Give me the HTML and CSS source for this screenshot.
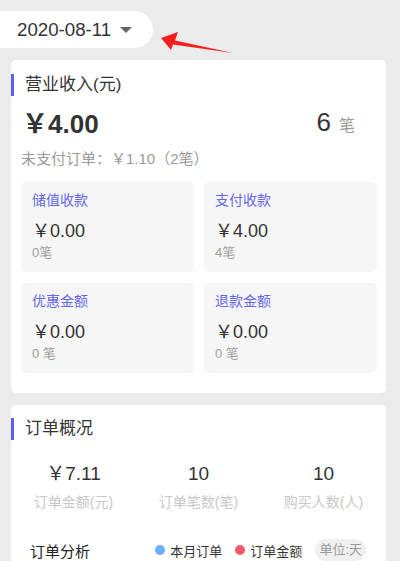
FILE: index.html
```html
<!DOCTYPE html>
<html lang="zh-CN">
<head>
<meta charset="utf-8">
<link rel="stylesheet" href="styles.css">
</head>
<body>
<div class="page">
  <div class="date-row">
    <div class="date-pill">
      <span class="date-text">2020-08-11</span>
      <span class="caret"></span>
    </div>
  </div>
  <svg class="arrow" width="80" height="30" viewBox="155 28 80 30">
    <polygon points="161,38 178,32 175,40.5 233,53 173,44.5 171,50" fill="#f61e1c"/>
  </svg>

  <section class="card card-income">
    <div class="card-head"><span class="bar"></span><span class="card-title">营业收入(元)</span></div>
    <div class="main-row">
      <span class="main-amount">￥4.00</span>
      <span class="main-count">6<span class="unit">笔</span></span>
    </div>
    <div class="unpaid">未支付订单：￥1.10（2笔）</div>
    <div class="tiles">
      <div class="tile">
        <div class="tile-label">储值收款</div>
        <div class="tile-amount">￥0.00</div>
        <div class="tile-count">0笔</div>
      </div>
      <div class="tile">
        <div class="tile-label">支付收款</div>
        <div class="tile-amount">￥4.00</div>
        <div class="tile-count">4笔</div>
      </div>
      <div class="tile">
        <div class="tile-label">优惠金额</div>
        <div class="tile-amount">￥0.00</div>
        <div class="tile-count">0 笔</div>
      </div>
      <div class="tile">
        <div class="tile-label">退款金额</div>
        <div class="tile-amount">￥0.00</div>
        <div class="tile-count">0 笔</div>
      </div>
    </div>
  </section>

  <section class="card card-orders">
    <div class="card-head"><span class="bar"></span><span class="card-title">订单概况</span></div>
    <div class="stats">
      <div class="stat"><div class="stat-value">￥7.11</div><div class="stat-label">订单金额(元)</div></div>
      <div class="stat"><div class="stat-value">10</div><div class="stat-label">订单笔数(笔)</div></div>
      <div class="stat"><div class="stat-value">10</div><div class="stat-label">购买人数(人)</div></div>
    </div>
    <div class="analysis">
      <span class="analysis-title">订单分析</span>
      <div class="legend">
        <span class="legend-item"><span class="dot dot-blue"></span>本月订单</span>
        <span class="legend-item"><span class="dot dot-red"></span>订单金额</span>
        <span class="unit-tag">单位:天</span>
      </div>
    </div>
    <div class="chart-space"></div>
  </section>
</div>
</body>
</html>
```

FILE: styles.css
```css
* { box-sizing: border-box; }
html, body {
  margin: 0;
  padding: 0;
  background: #ebebeb;
  font-family: "Liberation Sans", Arial, "Noto Sans CJK SC", sans-serif;
  color: #333;
  overflow: hidden;
}
.page {
  position: relative;
  width: 400px;
  height: 561px;
  overflow: hidden;
}
.date-row {
  padding-top: 11px;
}
.date-pill {
  width: 153px;
  height: 37px;
  background: #fff;
  border-radius: 0 19px 19px 0;
  display: flex;
  align-items: center;
  padding-left: 17px;
}
.date-text {
  font-size: 18.7px;
  color: #333;
  line-height: 37px;
}
.caret {
  margin-left: 9px;
  width: 0;
  height: 0;
  border-left: 6.5px solid transparent;
  border-right: 6.5px solid transparent;
  border-top: 6px solid #666;
  margin-top: 1px;
}
.arrow {
  position: absolute;
  left: 155px;
  top: 28px;
}
.card {
  background: #fff;
  border-radius: 5px;
  margin: 0 14px 0 11px;
}
.card-income {
  margin-top: 12px;
  padding: 14px 0 20px 0;
}
.card-orders {
  margin-top: 12px;
  padding-top: 13px;
}
.card-head {
  display: flex;
  align-items: center;
  height: 22px;
}
.bar {
  width: 3px;
  height: 22px;
  background: #5b5ef2;
}
.card-title {
  margin-left: 11px;
  font-size: 17px;
  line-height: 22px;
  color: #333;
}
.main-row {
  margin-top: 11px;
  height: 34px;
  display: flex;
  align-items: center;
  justify-content: space-between;
  padding: 0 31px 0 11px;
}
.main-amount {
  font-size: 26px;
  font-weight: bold;
  color: #333;
  line-height: 34px;
}
.main-count {
  font-size: 26px;
  color: #333;
  line-height: 34px;
}
.unit {
  font-size: 16px;
  color: #999;
  margin-left: 8px;
}
.unpaid {
  margin-top: 8px;
  padding-left: 10px;
  font-size: 15px;
  line-height: 20px;
  color: #9a9a9a;
}
.tiles {
  margin-top: 13px;
  padding: 0 9px 0 10px;
  display: grid;
  grid-template-columns: 1fr 1fr;
  column-gap: 10px;
  row-gap: 11px;
}
.tile {
  background: #f6f6f6;
  border-radius: 5px;
  padding: 8px 11px 10px 11px;
  height: 90px;
}
.tile-label {
  font-size: 14px;
  line-height: 20px;
  color: #6567f0;
}
.tile-amount {
  margin-top: 10px;
  font-size: 18px;
  line-height: 22px;
  color: #333;
}
.tile-count {
  margin-top: 2px;
  font-size: 13px;
  line-height: 18px;
  color: #a0a0a0;
}
.stats {
  margin-top: 22px;
  display: grid;
  grid-template-columns: repeat(3, 1fr);
  text-align: center;
}
.stat-value {
  font-size: 19px;
  line-height: 24px;
  color: #333;
}
.stat-label {
  margin-top: 6px;
  font-size: 14px;
  line-height: 20px;
  color: #c8c8c8;
}
.analysis {
  margin-top: 26px;
  display: flex;
  align-items: center;
  justify-content: space-between;
  padding: 0 20px 0 19px;
  height: 24px;
}
.analysis-title {
  font-size: 15px;
  color: #222;
}
.legend {
  display: flex;
  align-items: center;
}
.legend-item {
  display: flex;
  align-items: center;
  font-size: 13px;
  color: #333;
  margin-right: 13px;
}
.dot {
  width: 10px;
  height: 10px;
  border-radius: 50%;
  margin-right: 5px;
}
.dot-blue { background: #6cb2fa; }
.dot-red { background: #f4596b; }
.unit-tag {
  background: #f0f0f0;
  color: #999;
  font-size: 13px;
  line-height: 22px;
  padding: 0 4px;
  border-radius: 11px;
}
.chart-space {
  height: 200px;
}
```
